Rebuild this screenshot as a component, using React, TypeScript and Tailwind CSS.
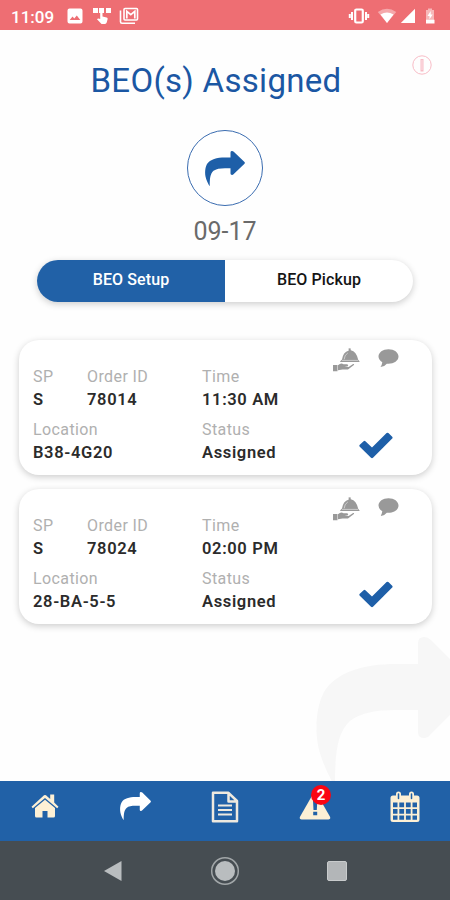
import { clsx } from "clsx";

type Order = {
  sp: string;
  orderId: string;
  time: string;
  location: string;
  status: string;
};

const orders: Order[] = [
  { sp: "S", orderId: "78014", time: "11:30 AM", location: "B38-4G20", status: "Assigned" },
  { sp: "S", orderId: "78024", time: "02:00 PM", location: "28-BA-5-5", status: "Assigned" },
];

function ShareArrow({ className }: { className?: string }) {
  return (
    <svg viewBox="0 0 160 148" preserveAspectRatio="none" fill="currentColor" className={className}>
      <path d="M17 147C13 138 5 124 2 108C-1 92 0 70 8 55C20 35 48 27 80 27H102V6Q102 0 108 0Q112 0 115 3L158 46Q161 50 158 54L115 97Q112 101 108 101Q102 101 102 95V73H80C60 73 44 76 34 84C20 96 19 122 19 147Z" />
    </svg>
  );
}

function StatusBar() {
  return (
    <header className="flex h-[30px] items-center justify-between bg-[#ee6e73] pr-[15px] pl-[11px] text-white">
      <div className="flex items-center">
        <span className="w-14 pt-[3px] text-[17px] leading-6 font-medium">11:09</span>
        <svg viewBox="0 0 16 16" className="mt-0.5 h-4 w-4">
          <path fill="currentColor" fillRule="evenodd" d="M2.5.5h11a2 2 0 0 1 2 2v11a2 2 0 0 1-2 2h-11a2 2 0 0 1-2-2v-11a2 2 0 0 1 2-2ZM2.7 12h10.6L9.8 7.4 7.3 10.6 5.5 8.5Z" />
        </svg>
        <svg viewBox="0 0 20 18" fill="currentColor" className="mt-0.5 ml-[9px] h-[18px] w-5">
          <path d="M1 1h5v5H1ZM7 1h5v5H7ZM14 1h5v5h-5ZM8.2 5h2.3v4.6l4.1.8q1.4.3 1 1.8l-.9 3.3q-.4 1.4-1.7 1.4H9.5L5 12.2q.8-1.2 3.2-.3Z" />
        </svg>
        <svg viewBox="0 0 20 18" className="mt-0.5 ml-[7px] h-[18px] w-5" fill="none" stroke="currentColor">
          <path strokeWidth="1.6" d="M1.5 3.5v11.2q0 1.5 1.5 1.5h13" />
          <rect x="5" y="1.5" width="13.5" height="11.5" rx="1" strokeWidth="1.6" />
          <path strokeWidth="1.7" d="M7.8 11.5V4.3l4 3.4 4-3.4v7.2" />
        </svg>
      </div>
      <div className="flex items-center pt-0.5">
        <svg viewBox="0 0 22 16" className="h-4 w-[22px]" fill="none" stroke="currentColor">
          <rect x="7.2" y="1.5" width="7.6" height="13" rx="1.2" strokeWidth="2.2" />
          <path strokeWidth="2" d="M4 4v8M18 4v8M1.8 6v4M20.2 6v4" />
        </svg>
        <svg viewBox="0 0 20 16" className="ml-[7px] h-4 w-5" fill="currentColor">
          <path opacity=".4" d="M.8 4Q10-2.5 19.2 4L10 15Z" />
          <path d="M3.5 6.5Q10 2.5 16.5 6.5L10 15Z" />
        </svg>
        <svg viewBox="0 0 16 16" className="ml-[3px] h-4 w-4" fill="currentColor">
          <path d="M15 .8V15H.8Z" />
        </svg>
        <svg viewBox="0 0 10 16" className="ml-[9px] h-4 w-[10px]" fill="currentColor">
          <path opacity=".5" d="M3 .5h4V2h2v10H1V2h2Z" />
          <path d="M5.7 3 2.5 8h2v3.2L7.7 6.5h-2ZM1 11.8h8.5v3.8H1Z" />
        </svg>
      </div>
    </header>
  );
}

function Field({ label, value, className }: { label: string; value: string; className?: string }) {
  return (
    <div className={clsx("flex flex-col", className)}>
      <span className="h-[23px] text-[16px] leading-[23px] tracking-[0.4px] text-[#b0b0b0]">{label}</span>
      <span className="h-[23px] text-[16.5px] leading-[23px] font-semibold tracking-[0.65px] whitespace-nowrap text-[#2b2b2b]">
        {value}
      </span>
    </div>
  );
}

function OrderCard({ order }: { order: Order }) {
  return (
    <article className="flex h-[135px] rounded-[20px] bg-white pt-[25px] pl-[14px] shadow-[0_2px_7px_rgba(0,0,0,0.2)]">
      <div className="flex w-[300px] flex-col gap-[7px]">
        <div className="flex">
          <Field label="SP" value={order.sp} className="w-[54px]" />
          <Field label="Order ID" value={order.orderId} className="w-[115px]" />
          <Field label="Time" value={order.time} />
        </div>
        <div className="flex">
          <Field label="Location" value={order.location} className="w-[169px]" />
          <Field label="Status" value={order.status} />
        </div>
      </div>
      <div className="-mt-[17px] flex flex-col">
        <div className="flex gap-[18px] text-[#999]">
          <svg viewBox="0 0 27 24" className="h-6 w-[27px]" fill="currentColor">
            <path d="M7.5 13 9 11.5Q10 4 15.8 2.4L15.5.6 17.5.3 17.8 2.2Q23.5 3.5 25.2 11.8L26.8 14H7Z" />
            <path d="M0 17h4.5v6.3H0ZM5 17.3q3-2.8 5.5-1h3.8q1.7.9.4 1.9l-3.2.4 4.1.3 4.5-2.9q1.6-.3.8 1.1L15 21.5H9.5l-4.5.7Z" />
            <path fill="none" stroke="#fff" strokeWidth=".7" opacity=".7" d="M11.2 11.4q.2-4.4 3.6-6.4M9 12.4h16" />
          </svg>
          <svg viewBox="0 0 21 20" className="mt-px h-5 w-[21px]" fill="currentColor">
            <path d="M10.5.3C16.2.3 20.5 3.4 20.5 7.6S16 14.8 10.4 14.8l-1.6-.1Q6.5 17.8 2.5 18 4 16 4.3 13.3.5 10.8.5 7.6C.5 3.4 4.8.3 10.5.3Z" />
          </svg>
        </div>
        <svg viewBox="0 0 34 27" className="mt-[60px] ml-[26px] h-[27px] w-[34px] text-[#1e5fa8]" fill="currentColor">
          <path d="M.8 12.8 4.6 9.2Q5.5 8.5 6.4 9.2L13 15.6 27.6 1.1Q28.5.2 29.4 1.1L33.2 4.7Q34 5.6 33.2 6.6L14 25.8Q13 26.6 12 25.8L.8 14.8Q-.2 13.8.8 12.8Z" />
        </svg>
      </div>
    </article>
  );
}

function TabBar() {
  return (
    <nav className="grid h-[60px] grid-cols-5 items-center justify-items-center bg-[#2161a7] text-[#fdf0d5]">
      <svg viewBox="0 0 28 24" className="-mt-[10px] h-6 w-7" fill="currentColor">
        <path d="M.5 12.7 13 1.3q1-.8 2 0l4.2 3.7V.5h4v8.1l4.3 4.1-1.3 1.5L14 3.9 1.8 14.2Z" />
        <path d="M14 5.7 24 14v8q0 1.5-1.5 1.5h-6V17h-5v6.5h-6Q4 23.5 4 22v-8Z" />
      </svg>
      <ShareArrow className="-mt-[10px] h-7 w-[31px] text-white" />
      <svg viewBox="0 0 28 32" className="-mt-[8px] h-8 w-7" fill="none" stroke="#eee9df" strokeWidth="2.5" strokeLinejoin="round">
        <path d="M2 1.8h15.5L26 10v20.2H2ZM17.5 2v8.5H26" />
        <path strokeWidth="2" d="M7 14.5h14M7 19h14M7 23.5h14" />
      </svg>
      <div className="relative -mt-[10px] h-7 w-8">
        <svg viewBox="0 0 32 28" className="h-7 w-8">
          <path fill="currentColor" d="M14.3 1.5Q16-.8 17.7 1.5L31 24.8Q32 27.4 29.5 27.4H2.5Q0 27.4 1 24.8Z" />
          <path fill="#2161a7" d="M14 8.5h4.3L17.8 18h-3.3ZM14.2 19.7h4v3.6h-4Z" />
        </svg>
        <span className="absolute -top-[7px] left-[12px] flex h-5 w-5 items-center justify-center rounded-full bg-[#fb0511] text-[15px] font-bold text-white">
          2
        </span>
      </div>
      <svg viewBox="0 0 30 32" className="-mt-[8px] h-8 w-[30px]">
        <path fill="currentColor" fillRule="evenodd" d="M3 4.5h3V3q0-2.5 2.5-2.5T11 3v1.5h8V3q0-2.5 2.5-2.5T24 3v1.5h3q2.5 0 2.5 2.5v21.5q0 2.5-2.5 2.5H3Q.5 31 .5 28.5V7Q.5 4.5 3 4.5ZM3 11.5v4.7h4.5v-4.7ZM9.3 11.5v4.7h4.8v-4.7ZM15.9 11.5v4.7h4.8v-4.7ZM22.5 11.5v4.7H27v-4.7ZM3 18v4.7h4.5V18ZM9.3 18v4.7h4.8V18ZM15.9 18v4.7h4.8V18ZM22.5 18v4.7H27V18ZM3 24.5v4.2h4.5v-4.2ZM9.3 24.5v4.2h4.8v-4.2ZM15.9 24.5v4.2h4.8v-4.2ZM22.5 24.5v4.2H27v-4.2Z" />
        <path stroke="#2161a7" strokeWidth="1.5" strokeLinecap="round" d="M8.5 3v4.5M21.5 3v4.5" />
      </svg>
    </nav>
  );
}

export default function App() {
  return (
    <div className="flex h-[900px] w-[450px] flex-col overflow-hidden bg-[#fefefe] font-['Roboto',sans-serif]">
      <StatusBar />

      <main className="relative flex flex-1 flex-col overflow-hidden">
        <ShareArrow className="absolute top-[607px] left-[316px] h-[148px] w-40 text-[#f7f7f7]" />
        <svg viewBox="0 0 20 20" className="absolute top-[25px] left-[412px] h-5 w-5" fill="none" stroke="#f8bcc6">
          <circle cx="10" cy="10" r="9.2" strokeWidth="1" />
          <path strokeWidth="3" d="M10 4v12.5" />
          <path stroke="#fff" strokeWidth=".6" d="M10 5v10" />
        </svg>

        <h1 className="mt-[29px] pr-[18px] text-center text-[33px] leading-[44px] tracking-[0.3px] text-[#1b57a3]">
          BEO(s) Assigned
        </h1>

        <div className="mx-auto mt-[27px] flex h-[76px] w-[76px] items-center justify-center rounded-full border border-[#3a6cb0] bg-white">
          <ShareArrow className="h-[35px] w-10 text-[#1e5fa8]" />
        </div>
        <p className="mt-[10px] text-center text-[25px] leading-[32px] text-[#6a6a6a]">09-17</p>

        <div className="mx-auto mt-[12px] flex h-[42px] w-[376px] overflow-hidden rounded-full bg-white text-[16px] font-medium shadow-[0_2px_7px_rgba(0,0,0,0.2)]">
          <button className="w-1/2 bg-[#2161a7] pb-0.5 tracking-[0.1px] text-white">BEO Setup</button>
          <button className="w-1/2 pb-0.5 tracking-[0.1px] text-[#151515]">BEO Pickup</button>
        </div>

        <section className="relative mt-[38px] flex flex-col gap-[14px] pr-[18px] pl-[19px]">
          {orders.map((order) => (
            <OrderCard key={order.orderId} order={order} />
          ))}
        </section>
      </main>

      <TabBar />

      <footer className="flex h-[59px] items-center justify-center gap-[87px] bg-[#464d52]">
        <svg viewBox="0 0 20 22" className="h-[22px] w-5">
          <path fill="#b9bdbf" d="M18.5 1v20L1 11Z" />
        </svg>
        <svg viewBox="0 0 30 30" className="h-[30px] w-[30px]">
          <circle cx="15" cy="15" r="13.3" fill="none" stroke="#a1a6a8" strokeWidth="1.5" />
          <circle cx="15" cy="15" r="10" fill="#b9bdbf" />
        </svg>
        <div className="h-5 w-5 rounded-[2px] border border-[#c8cbcc] bg-[#b3b6b8]" />
      </footer>
    </div>
  );
}
